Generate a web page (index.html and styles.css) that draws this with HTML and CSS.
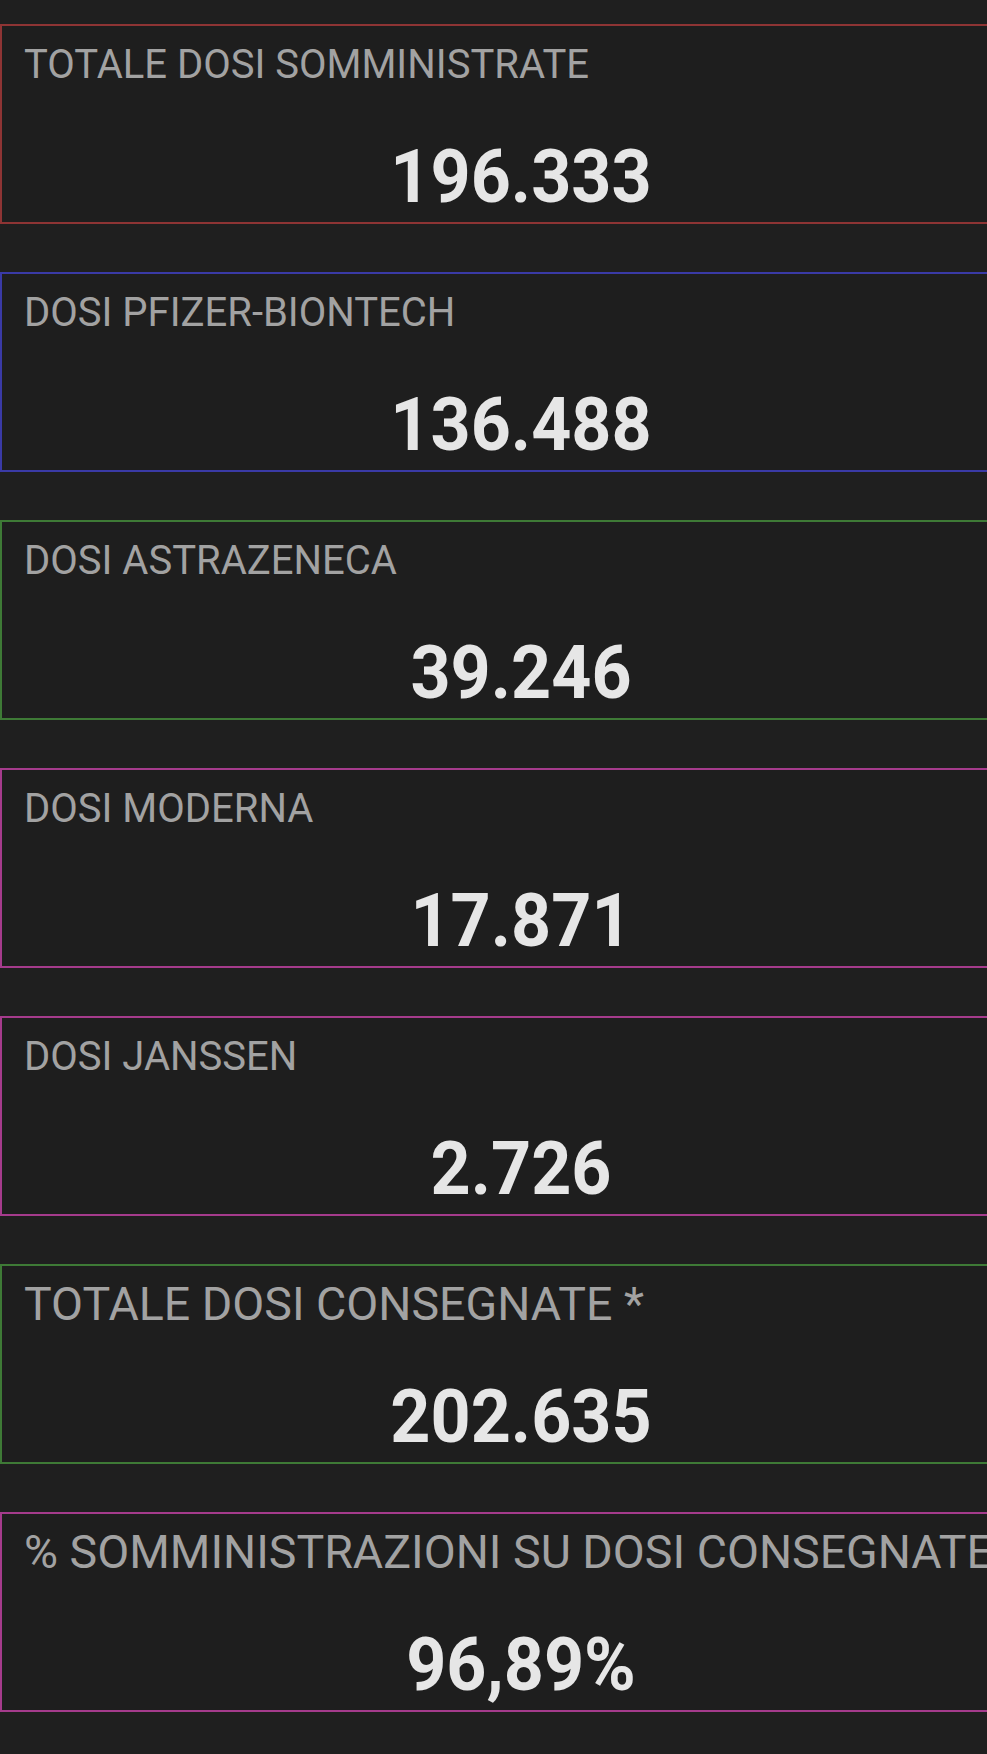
FILE: index.html
```html
<!DOCTYPE html>
<html lang="it">
<head>
<meta charset="utf-8">
<title>Vaccini</title>
<link rel="stylesheet" href="styles.css">
</head>
<body>
<main class="page">
  <section class="card card-red">
    <div class="label">TOTALE DOSI SOMMINISTRATE</div>
    <div class="value">196.333</div>
  </section>
  <section class="card card-blue">
    <div class="label">DOSI PFIZER-BIONTECH</div>
    <div class="value">136.488</div>
  </section>
  <section class="card card-green">
    <div class="label">DOSI ASTRAZENECA</div>
    <div class="value">39.246</div>
  </section>
  <section class="card card-pink">
    <div class="label">DOSI MODERNA</div>
    <div class="value">17.871</div>
  </section>
  <section class="card card-pink">
    <div class="label">DOSI JANSSEN</div>
    <div class="value">2.726</div>
  </section>
  <section class="card card-green">
    <div class="label label-lg">TOTALE DOSI CONSEGNATE *</div>
    <div class="value">202.635</div>
  </section>
  <section class="card card-pink">
    <div class="label label-lg">% SOMMINISTRAZIONI SU DOSI CONSEGNATE</div>
    <div class="value">96,89%</div>
  </section>
</main>
</body>
</html>
```

FILE: styles.css
```css
html, body {
  margin: 0;
  padding: 0;
  background: #1f1f1f;
}

body {
  width: 987px;
  height: 1754px;
  overflow: hidden;
  font-family: Roboto, "Liberation Sans", Arial, sans-serif;
}

.page {
  display: flex;
  flex-direction: column;
  gap: 48px;
  padding-top: 24px;
  width: 1042px;
}

.card {
  box-sizing: border-box;
  height: 200px;
  border: 2px solid #8c3232;
  padding: 15px 0 0 22px;
  background: #1e1e1e;
  overflow: hidden;
}

.card-red { border-color: #8e3434; }
.card-blue { border-color: #3a3aa6; }
.card-green { border-color: #3e7a36; }
.card-pink { border-color: #a53b8c; }

.label {
  font-size: 40px;
  line-height: 47px;
  color: #a2a2a2;
  white-space: nowrap;
}

.label-lg {
  font-size: 46.5px;
}

.value {
  margin-top: 47px;
  margin-left: -22px;
  text-align: center;
  font-size: 70px;
  font-weight: 700;
  line-height: 84px;
  color: #e6e6e6;
  transform: scaleY(1.06);
}
```
